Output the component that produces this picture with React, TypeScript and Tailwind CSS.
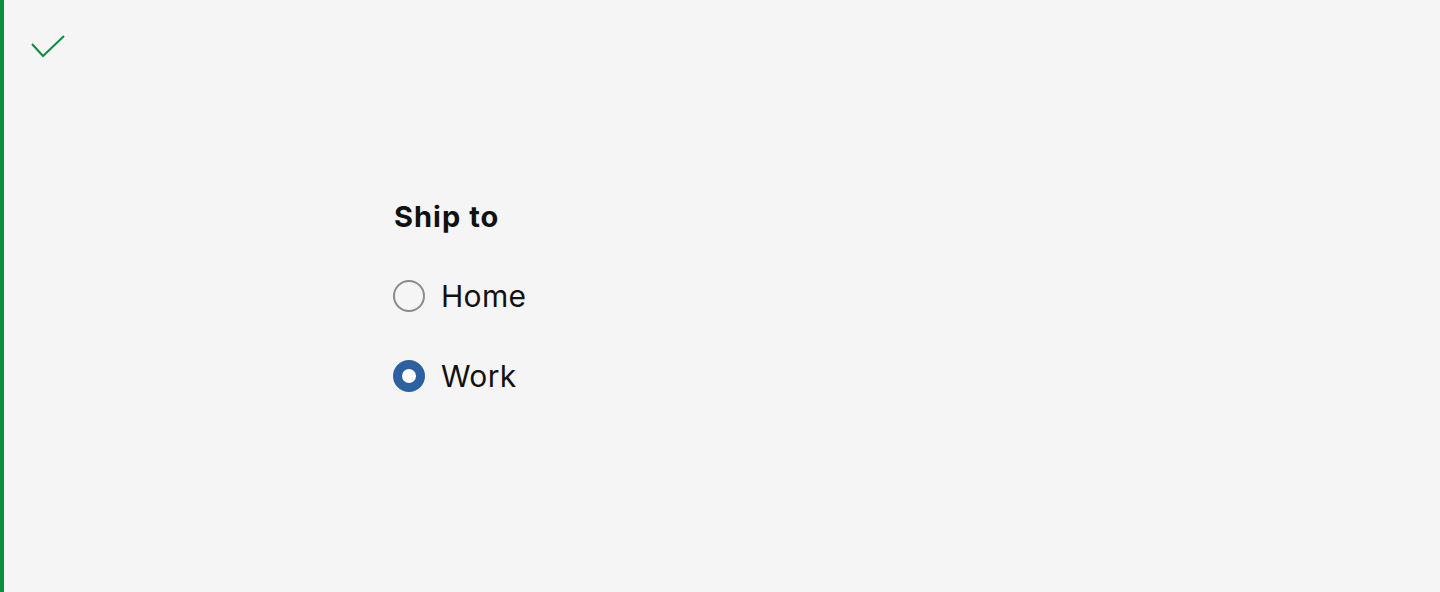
import { useState } from 'react';

const options = ['Home', 'Work'];

export default function App() {
  const [value, setValue] = useState('Work');

  return (
    <div className="h-[592px] w-[1440px] bg-[#f5f5f5] border-l-4 border-[#0a8f3d] flex flex-col" style={{ fontFamily: 'Inter, "Noto Sans", sans-serif' }}>
      {/* Status */}
      <div className="pl-[27px] pt-[35px]">
        <svg width="34" height="24" viewBox="0 0 34 24" fill="none">
          <path d="M1 9 L12 21 L33 1" stroke="#0a8f3d" strokeWidth="2" />
        </svg>
      </div>

      {/* Radio group */}
      <fieldset className="ml-[390px] mt-[143px] flex flex-col">
        <legend className="text-[29px] font-bold text-[#111] leading-none tracking-[0.035em]">Ship to</legend>
        <div className="mt-[49px] flex flex-col gap-[48px]">
          {options.map((opt) => {
            const checked = value === opt;
            return (
              <label key={opt} className="flex items-center gap-[16px] cursor-pointer -ml-px" onClick={() => setValue(opt)}>
                <span
                  className={
                    checked
                      ? 'w-8 h-8 rounded-full border-[9px] border-[#2c61a1] bg-white'
                      : 'w-8 h-8 rounded-full border-2 border-[#8a8a8a] bg-[#f5f5f5]'
                  }
                />
                <span className="text-[30px] text-[#111] leading-none tracking-[0.01em]">{opt}</span>
              </label>
            );
          })}
        </div>
      </fieldset>
    </div>
  );
}
